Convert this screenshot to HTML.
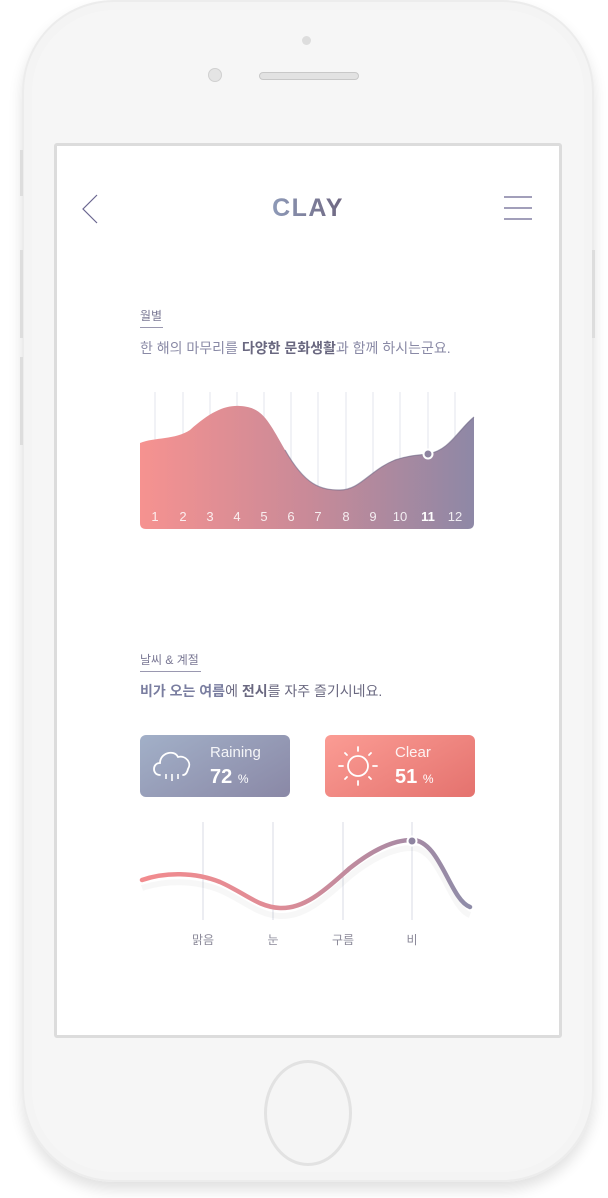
<!DOCTYPE html>
<html><head><meta charset="utf-8"><style>
body{margin:0;width:608px;height:1198px;background:#fff;position:relative;overflow:hidden;font-family:"Liberation Sans","Noto Sans CJK KR",sans-serif}
.abs{position:absolute}
.phone{left:22px;top:0;width:572px;height:1182px;border-radius:92px;background:#f6f6f6;box-shadow:0 8px 14px rgba(0,0,0,.12),inset 0 0 0 2px #ececec,inset 0 0 0 10px #f4f4f4}
.screen{left:54px;top:143px;width:502px;height:889px;border:3px solid #dcdcdc;border-radius:3px;background:#fff}
.k{font-size:14px;color:#8a8aa6}
.b{font-weight:bold;color:#6a6880}
.card{border-radius:6px;height:62px;width:150px;color:#fff}
</style></head><body>
<div class="abs phone"></div>
<div class="abs" style="left:20px;top:150px;width:3px;height:46px;background:#ddd"></div>
<div class="abs" style="left:20px;top:250px;width:3px;height:88px;background:#ddd"></div>
<div class="abs" style="left:20px;top:357px;width:3px;height:88px;background:#ddd"></div>
<div class="abs" style="left:592px;top:250px;width:3px;height:88px;background:#ddd"></div>
<div class="abs" style="left:302px;top:36px;width:9px;height:9px;border-radius:50%;background:#ddd"></div>
<div class="abs" style="left:208px;top:68px;width:14px;height:14px;border-radius:50%;background:#e4e4e4;border:1px solid #d0d0d0;box-sizing:border-box"></div>
<div class="abs" style="left:259px;top:72px;width:100px;height:8px;border-radius:4px;background:#e2e2e2;border:1px solid #c8c8c8;box-sizing:border-box"></div>
<div class="abs" style="left:264px;top:1060px;width:88px;height:106px;border-radius:50%;background:#f5f5f5;border:3px solid #e2e2e2;box-sizing:border-box"></div>
<div class="abs screen"></div>
<svg class="abs" style="left:0;top:0" width="608" height="1198">
<defs>
<linearGradient id="g1" x1="0" x2="1"><stop offset="0" stop-color="#f69290"/><stop offset=".5" stop-color="#c98a98"/><stop offset="1" stop-color="#8e88a6"/></linearGradient>
<linearGradient id="g2" x1="0" x2="1"><stop offset="0" stop-color="#f28b8e"/><stop offset=".4" stop-color="#e08c96"/><stop offset=".8" stop-color="#a98aa4"/><stop offset="1" stop-color="#8e8ca8"/></linearGradient>
<linearGradient id="t" x1="0" x2="1"><stop offset="0" stop-color="#8e9ab8"/><stop offset="1" stop-color="#6e6680"/></linearGradient>
</defs>
<path d="M97 195 L83 209 L97 223" fill="none" stroke="#6a6690" stroke-width="1.2"/>
<g stroke="#6a6690" stroke-width="1.2"><line x1="504" y1="197" x2="532" y2="197"/><line x1="504" y1="208" x2="532" y2="208"/><line x1="504" y1="219" x2="532" y2="219"/></g>
<text x="308" y="216" text-anchor="middle" font-family="Liberation Sans" font-weight="bold" font-size="25" fill="url(#t)" letter-spacing="1.5">CLAY</text>
<g stroke="#e3e4ec" stroke-width="1">
<line x1="155" y1="392" x2="155" y2="529"/><line x1="183" y1="392" x2="183" y2="529"/><line x1="210" y1="392" x2="210" y2="529"/><line x1="237" y1="392" x2="237" y2="529"/><line x1="264" y1="392" x2="264" y2="529"/><line x1="291" y1="392" x2="291" y2="529"/><line x1="318" y1="392" x2="318" y2="529"/><line x1="346" y1="392" x2="346" y2="529"/><line x1="373" y1="392" x2="373" y2="529"/><line x1="400" y1="392" x2="400" y2="529"/><line x1="428" y1="392" x2="428" y2="529"/><line x1="455" y1="392" x2="455" y2="529"/>
</g>
<path d="M140 443 C155 437 175 440 190 430 C210 412 225 405 240 406 C262 407 268 420 285 450 C305 485 320 490 340 490 C360 490 370 470 395 460 C410 455 420 455 428 454 C450 450 458 430 474 417 L474 523 Q474 529 468 529 L146 529 Q140 529 140 523 Z" fill="url(#g1)"/>
<path d="M285 450 C305 485 320 490 340 490 C360 490 370 470 395 460 C410 455 420 455 428 454 C450 450 458 430 474 417" fill="none" stroke="#6e6886" stroke-width="1.2" opacity=".6"/>
<circle cx="428" cy="454" r="4.5" fill="#8e84a0" stroke="#fff" stroke-width="2"/>
<g font-family="Liberation Sans" font-size="13" fill="#fff" fill-opacity=".85" text-anchor="middle">
<text x="155" y="521">1</text><text x="183" y="521">2</text><text x="210" y="521">3</text><text x="237" y="521">4</text><text x="264" y="521">5</text><text x="291" y="521">6</text><text x="318" y="521">7</text><text x="346" y="521">8</text><text x="373" y="521">9</text><text x="400" y="521">10</text><text x="428" y="521" font-weight="bold" fill-opacity="1">11</text><text x="455" y="521">12</text>
</g>
<g stroke="#d8dbe6" stroke-width="1"><line x1="203" y1="822" x2="203" y2="920"/><line x1="273" y1="822" x2="273" y2="920"/><line x1="343" y1="822" x2="343" y2="920"/><line x1="412" y1="822" x2="412" y2="920"/></g>
<path d="M142 880 C165 872 195 872 220 882 C245 893 258 907 280 908 C305 909 325 890 350 868 C375 848 395 840 412 840 C440 840 450 900 470 907" fill="none" stroke="#000" stroke-opacity=".03" stroke-width="6" transform="translate(0,8)"/>
<path d="M142 880 C165 872 195 872 220 882 C245 893 258 907 280 908 C305 909 325 890 350 868 C375 848 395 840 412 840 C440 840 450 900 470 907" fill="none" stroke="url(#g2)" stroke-width="4.5" stroke-linecap="round"/>
<circle cx="412" cy="841" r="4.5" fill="#8e84a0" stroke="#fff" stroke-width="2"/>
<g font-size="12" fill="#8a8898" text-anchor="middle" font-family="Liberation Sans, Noto Sans CJK KR, sans-serif">
<text x="203" y="944">맑음</text><text x="273" y="944">눈</text><text x="343" y="944">구름</text><text x="412" y="944">비</text></g>
</svg>
<div class="abs" style="left:140px;top:307px;font-size:12px;color:#7a7894">월별</div>
<div class="abs" style="left:140px;top:327px;width:23px;height:1px;background:#9a98b0"></div>
<div class="abs k" style="left:140px;top:338px">한 해의 마무리를 <span class="b">다양한 문화생활</span>과 함께 하시는군요.</div>
<div class="abs" style="left:140px;top:651px;font-size:12px;color:#7a7894">날씨 &amp; 계절</div>
<div class="abs" style="left:140px;top:671px;width:61px;height:1px;background:#9a98b0"></div>
<div class="abs k" style="left:140px;top:681px;color:#6a6880"><span class="b" style="color:#7a7ea0">비가 오는 여름</span>에 <span class="b">전시</span>를 자주 즐기시네요.</div>
<div class="abs card" style="left:140px;top:735px;background:linear-gradient(150deg,#a2b0c8,#8a88a6)">
<svg class="abs" style="left:10px;top:12px" width="46" height="40"><path d="M10 28 C2 28 2 16 10 16 C10 6 24 2 28 10 C36 8 42 16 38 22 C37 26 35 28 33 28" fill="none" stroke="#fff" stroke-width="1.8" stroke-linecap="round"/><g stroke="#fff" stroke-width="1.6"><line x1="16" y1="27" x2="16" y2="32"/><line x1="22" y1="27" x2="22" y2="34"/><line x1="28" y1="27" x2="28" y2="32"/></g></svg>
<div class="abs" style="left:70px;top:9px;font-size:15px;opacity:.9">Raining</div>
<div class="abs" style="left:70px;top:31px;font-size:20px;font-weight:bold">72 <span style="font-size:12px;font-weight:normal">%</span></div></div>
<div class="abs card" style="left:325px;top:735px;background:linear-gradient(150deg,#fb9c94,#e4726e)">
<svg class="abs" style="left:10px;top:8px" width="46" height="46"><circle cx="23" cy="23" r="10" fill="none" stroke="#fff" stroke-width="1.8"/><g stroke="#fff" stroke-width="1.8" stroke-linecap="round"><line x1="23" y1="4" x2="23" y2="8"/><line x1="23" y1="38" x2="23" y2="42"/><line x1="4" y1="23" x2="8" y2="23"/><line x1="38" y1="23" x2="42" y2="23"/><line x1="10" y1="10" x2="12" y2="12"/><line x1="34" y1="34" x2="36" y2="36"/><line x1="36" y1="10" x2="34" y2="12"/><line x1="10" y1="36" x2="12" y2="34"/></g></svg>
<div class="abs" style="left:70px;top:9px;font-size:15px;opacity:.9">Clear</div>
<div class="abs" style="left:70px;top:31px;font-size:20px;font-weight:bold">51 <span style="font-size:12px;font-weight:normal">%</span></div></div>
</body></html>
